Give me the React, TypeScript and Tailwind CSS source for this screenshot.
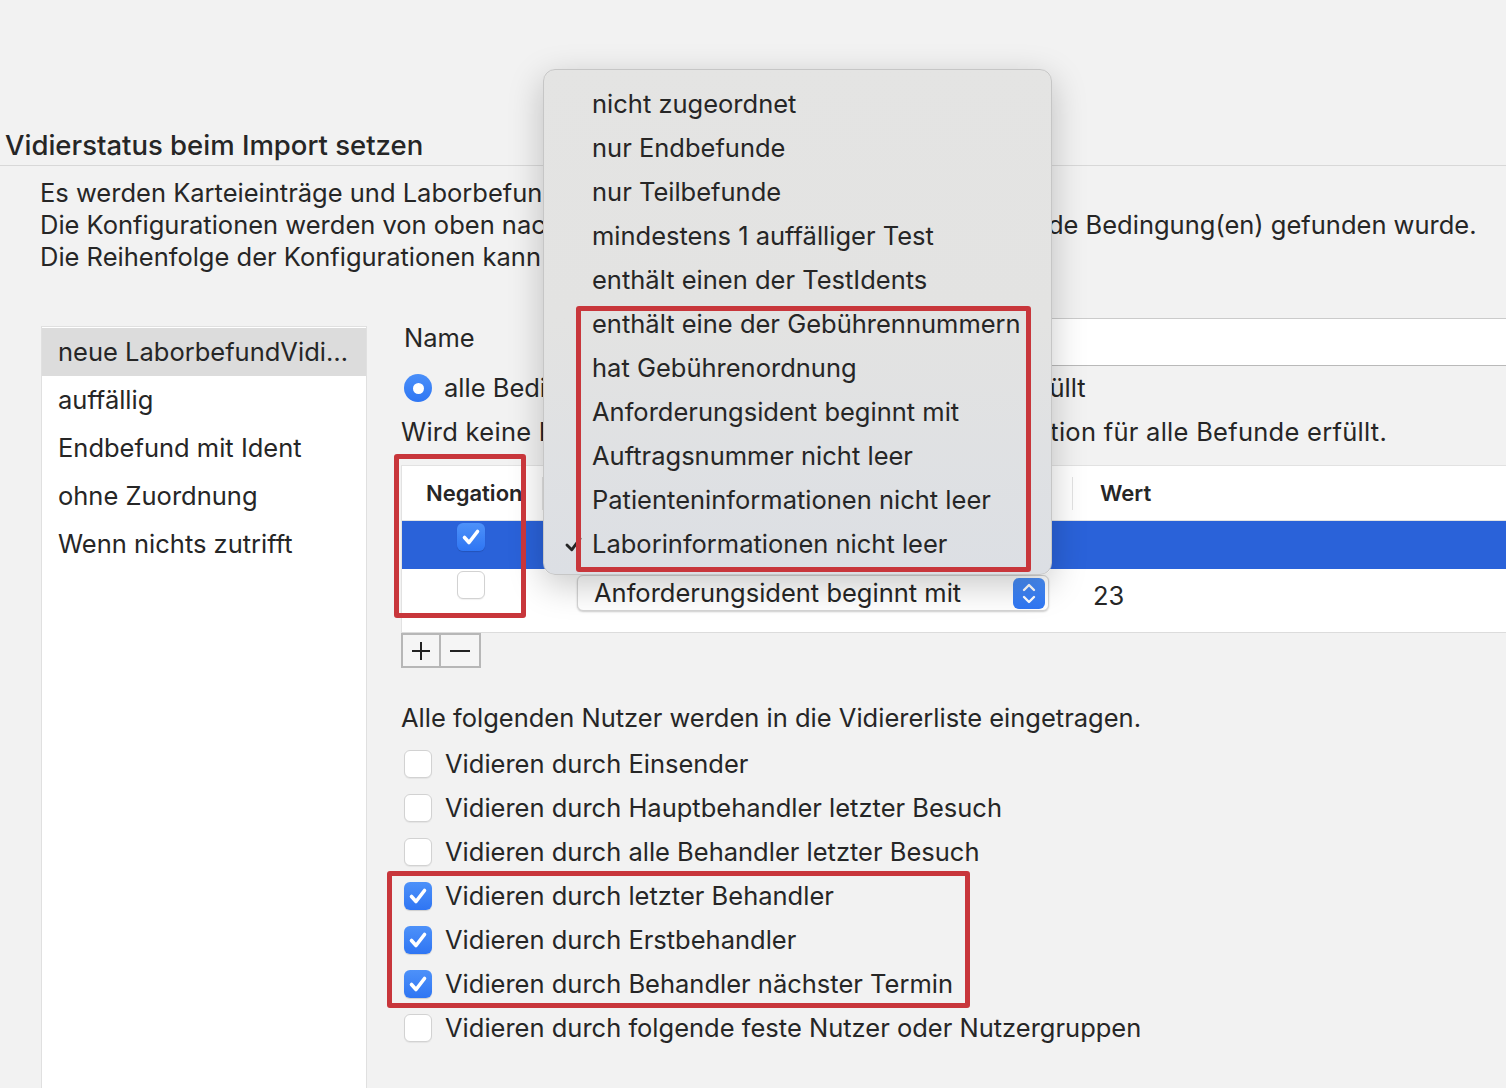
import React from "react";

const menuItems = [
  "nicht zugeordnet",
  "nur Endbefunde",
  "nur Teilbefunde",
  "mindestens 1 auffälliger Test",
  "enthält einen der TestIdents",
  "enthält eine der Gebührennummern",
  "hat Gebührenordnung",
  "Anforderungsident beginnt mit",
  "Auftragsnummer nicht leer",
  "Patienteninformationen nicht leer",
  "Laborinformationen nicht leer",
];

const configs = ["neue LaborbefundVidierung", "auffällig", "Endbefund mit Ident", "ohne Zuordnung", "Wenn nichts zutrifft"];

const users = [
  { label: "Vidieren durch Einsender", checked: false },
  { label: "Vidieren durch Hauptbehandler letzter Besuch", checked: false },
  { label: "Vidieren durch alle Behandler letzter Besuch", checked: false },
  { label: "Vidieren durch letzter Behandler", checked: true },
  { label: "Vidieren durch Erstbehandler", checked: true },
  { label: "Vidieren durch Behandler nächster Termin", checked: true },
  { label: "Vidieren durch folgende feste Nutzer oder Nutzergruppen", checked: false },
];

function CheckMark() {
  return (
    <svg viewBox="0 0 28 28" className="w-[28px] h-[28px]">
      <path d="M7.5 14.5 L12 19.5 L20.5 8.5" fill="none" stroke="white" strokeWidth="3.6" strokeLinecap="round" strokeLinejoin="round" />
    </svg>
  );
}

function Checkbox({ checked }: { checked: boolean }) {
  if (checked) {
    return (
      <div className="w-[28px] h-[28px] shrink-0 rounded-[6px] bg-gradient-to-b from-[#4d91f9] to-[#2f75f3] shadow-[0_1px_1px_rgba(0,0,0,0.15)]">
        <CheckMark />
      </div>
    );
  }
  return <div className="w-[28px] h-[28px] shrink-0 rounded-[6px] bg-white border border-[#d2d2d2] shadow-[0_1px_1px_rgba(0,0,0,0.06)]" />;
}

function Radio() {
  return (
    <div className="w-[28px] h-[28px] shrink-0 rounded-full bg-gradient-to-b from-[#4a8ff9] to-[#2f76f3] flex items-center justify-center">
      <div className="w-[11px] h-[11px] rounded-full bg-white" />
    </div>
  );
}

function Stepper() {
  return (
    <div className="w-[32px] h-[31px] rounded-[6px] bg-gradient-to-b from-[#4a8ff9] to-[#2f76f3] flex items-center justify-center">
      <svg viewBox="0 0 32 31" className="w-[32px] h-[31px]">
        <path d="M11 12 L16 7 L21 12" fill="none" stroke="white" strokeWidth="2.4" strokeLinecap="round" strokeLinejoin="round" />
        <path d="M11 19 L16 24 L21 19" fill="none" stroke="white" strokeWidth="2.4" strokeLinecap="round" strokeLinejoin="round" />
      </svg>
    </div>
  );
}

export default function App() {
  return (
    <div className="relative w-[1506px] h-[1088px] overflow-hidden bg-[#f2f2f2] text-[#262626] [font-family:Inter,'Noto_Sans',sans-serif]">
      <div className="pl-[5px] pt-[128px] pb-[3px] border-b border-[#d8d8d8] text-[27.5px] leading-[34px] font-medium">
        Vidierstatus beim Import setzen
      </div>

      <div className="pl-[40px] pt-[11px] text-[25.5px] leading-[32px] whitespace-nowrap">
        <p>Es werden Karteieinträge und Laborbefunde beim Import automatisch vidiert.</p>
        <p>Die Konfigurationen werden von oben nach unten einzeln geprüft, bis eine zutreffende Bedingung(en) gefunden wurde.</p>
        <p>Die Reihenfolge der Konfigurationen kann per Drag &amp; Drop geändert werden.</p>
      </div>

      <div className="flex mt-[45px]">
        <div className="ml-[41px] mt-[8px] w-[326px] h-[800px] shrink-0 bg-white border border-b-0 border-[#e0e0e0] pt-[1px] text-[25.5px]">
          {configs.map((c, i) => (
            <div key={c} className={`h-[48px] flex items-center pl-[16px] pr-[18px] ${i === 0 ? "bg-[#dcdcdc]" : ""}`}>
              <span className="truncate">{c}</span>
            </div>
          ))}
        </div>

        <div className="ml-[34px] flex-1 text-[25.5px]">
          <div className="h-[48px] flex items-center">
            <span className="pl-[3px] -mt-[8px] w-[179px]">Name</span>
            <div className="flex-1 h-[48px] bg-white border-t border-b border-t-[#cbcbcb] border-b-[#b9b9b9]" />
          </div>

          <div className="h-[44px] flex items-center pl-[3px] whitespace-nowrap">
            <Radio />
            <span className="ml-[12px]">alle Bedingungen erfüllt</span>
            <div className="ml-[50px] w-[28px] h-[28px] rounded-full bg-white border border-[#cfcfcf]" />
            <span className="ml-[12px]">eine Bedingung erfüllt</span>
          </div>

          <div className="h-[44px] flex items-center whitespace-nowrap tracking-[0.27px]">
            Wird keine Bedingung hinzugefügt, gilt die Konfiguration für alle Befunde erfüllt.
          </div>

          <div className="mt-[11px] bg-white border-t border-l border-[#e2e2e2]">
            <div className="h-[55px] flex items-center border-b border-[#e3e3e3] text-[22px] font-semibold">
              <div className="w-[140px] pl-[24px]">Negation</div>
              <div className="h-[33px] border-l border-[#e3e3e3]" />
              <div className="w-[529px] pl-[28px]">Bedingung</div>
              <div className="h-[33px] border-l border-[#e3e3e3]" />
              <div className="pl-[27px]">Wert</div>
            </div>
            <div className="h-[48px] flex bg-[#2a62d9]">
              <div className="w-[140px] flex justify-center pt-[2px] pr-[2px]">
                <Checkbox checked />
              </div>
            </div>
            <div className="h-[64px] flex border-b border-[#dcdcdc]">
              <div className="w-[140px] flex justify-center pt-[2px] pr-[2px]">
                <Checkbox checked={false} />
              </div>
              <div className="pl-[35px] pt-[6px]">
                <div className="w-[472px] h-[36px] flex items-center justify-between bg-white rounded-[6px] border border-[#d4d4d4] shadow-[0_1px_2px_rgba(0,0,0,0.2)] pl-[16px] pr-[3px]">
                  <span>Anforderungsident beginnt mit</span>
                  <Stepper />
                </div>
              </div>
              <div className="pl-[44px] pt-[8px]">23</div>
            </div>
          </div>

          <div className="flex">
            <button className="w-[40px] h-[35px] flex items-center justify-center bg-[#f5f5f5] border-2 border-[#b7b7b7]">
              <svg viewBox="0 0 24 24" className="w-[24px] h-[24px]">
                <path d="M12 3 V21 M3 12 H21" stroke="#222" strokeWidth="2" />
              </svg>
            </button>
            <button className="w-[40px] h-[35px] flex items-center justify-center bg-[#f5f5f5] border-2 border-l-0 border-[#b7b7b7]">
              <svg viewBox="0 0 24 24" className="w-[24px] h-[24px]">
                <path d="M2 12 H22" stroke="#222" strokeWidth="2" />
              </svg>
            </button>
          </div>

          <div className="mt-[28px] h-[44px] flex items-center">Alle folgenden Nutzer werden in die Vidiererliste eingetragen.</div>
          <div className="mt-[2px]">
            {users.map((u) => (
              <div key={u.label} className="h-[44px] flex items-center pl-[3px] gap-[13px] whitespace-nowrap">
                <Checkbox checked={u.checked} />
                <span>{u.label}</span>
              </div>
            ))}
          </div>
        </div>
      </div>

      {/* popup menu of the condition select */}
      <div className="absolute left-[543px] top-[69px] w-[509px] h-[506px] rounded-[12px] border border-[#c6c6c6] bg-gradient-to-b from-[#e4e4e3] via-[#e3e3e2] to-[#dcdfe4] shadow-[0_10px_35px_rgba(0,0,0,0.22)] pt-[12px] text-[25.5px]">
        {menuItems.map((m, i) => (
          <div key={m} className="relative h-[44px] flex items-center pl-[48px] whitespace-nowrap">
            {i === menuItems.length - 1 && (
              <svg viewBox="0 0 16 16" className="absolute left-[20px] top-[13px] w-[19px] h-[19px]">
                <path d="M2.5 8.5 L6.5 12.5 L13.5 3" fill="none" stroke="#262626" strokeWidth="2.4" strokeLinecap="round" strokeLinejoin="round" />
              </svg>
            )}
            {m}
          </div>
        ))}
      </div>

      {/* annotation boxes */}
      <div className="absolute left-[394px] top-[454px] w-[132px] h-[164px] border-[5px] border-[#c8363b] rounded-[3px]" />
      <div className="absolute left-[576px] top-[306px] w-[455px] h-[266px] border-[5px] border-[#c8363b] rounded-[3px]" />
      <div className="absolute left-[387px] top-[871px] w-[583px] h-[137px] border-[5px] border-[#c8363b] rounded-[3px]" />
    </div>
  );
}
